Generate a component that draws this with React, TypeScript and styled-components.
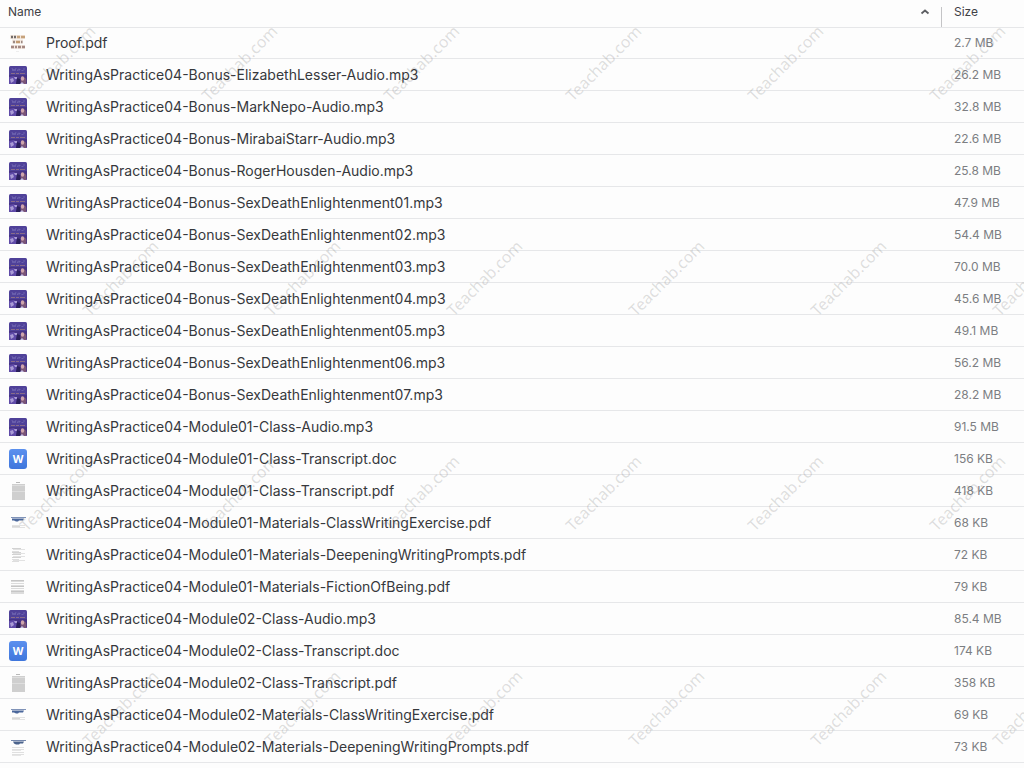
import React from "react";
import styled, { createGlobalStyle } from "styled-components";

const GlobalStyle = createGlobalStyle`
  body {
    margin: 0;
    background: #fdfdfd;
    font-family: Inter, "Liberation Sans", sans-serif;
  }
`;

type Kind = "cover" | "proof" | "doc" | "transcript" | "exercise" | "prompts" | "fiction" | "promptsHeaded";

type FileEntry = { name: string; size: string; kind: Kind };

const P = "WritingAsPractice04-";

const files: FileEntry[] = [
  { name: "Proof.pdf", size: "2.7 MB", kind: "proof" },
  { name: P + "Bonus-ElizabethLesser-Audio.mp3", size: "26.2 MB", kind: "cover" },
  { name: P + "Bonus-MarkNepo-Audio.mp3", size: "32.8 MB", kind: "cover" },
  { name: P + "Bonus-MirabaiStarr-Audio.mp3", size: "22.6 MB", kind: "cover" },
  { name: P + "Bonus-RogerHousden-Audio.mp3", size: "25.8 MB", kind: "cover" },
  { name: P + "Bonus-SexDeathEnlightenment01.mp3", size: "47.9 MB", kind: "cover" },
  { name: P + "Bonus-SexDeathEnlightenment02.mp3", size: "54.4 MB", kind: "cover" },
  { name: P + "Bonus-SexDeathEnlightenment03.mp3", size: "70.0 MB", kind: "cover" },
  { name: P + "Bonus-SexDeathEnlightenment04.mp3", size: "45.6 MB", kind: "cover" },
  { name: P + "Bonus-SexDeathEnlightenment05.mp3", size: "49.1 MB", kind: "cover" },
  { name: P + "Bonus-SexDeathEnlightenment06.mp3", size: "56.2 MB", kind: "cover" },
  { name: P + "Bonus-SexDeathEnlightenment07.mp3", size: "28.2 MB", kind: "cover" },
  { name: P + "Module01-Class-Audio.mp3", size: "91.5 MB", kind: "cover" },
  { name: P + "Module01-Class-Transcript.doc", size: "156 KB", kind: "doc" },
  { name: P + "Module01-Class-Transcript.pdf", size: "418 KB", kind: "transcript" },
  { name: P + "Module01-Materials-ClassWritingExercise.pdf", size: "68 KB", kind: "exercise" },
  { name: P + "Module01-Materials-DeepeningWritingPrompts.pdf", size: "72 KB", kind: "prompts" },
  { name: P + "Module01-Materials-FictionOfBeing.pdf", size: "79 KB", kind: "fiction" },
  { name: P + "Module02-Class-Audio.mp3", size: "85.4 MB", kind: "cover" },
  { name: P + "Module02-Class-Transcript.doc", size: "174 KB", kind: "doc" },
  { name: P + "Module02-Class-Transcript.pdf", size: "358 KB", kind: "transcript" },
  { name: P + "Module02-Materials-ClassWritingExercise.pdf", size: "69 KB", kind: "exercise" },
  { name: P + "Module02-Materials-DeepeningWritingPrompts.pdf", size: "73 KB", kind: "promptsHeaded" },
];

const Page = styled.main`
  position: relative;
  min-height: 100vh;
  overflow: hidden;
`;

const FileTable = styled.table`
  width: 100%;
  table-layout: fixed;
  border-collapse: collapse;
`;

const NameCol = styled.col``;

const SizeCol = styled.col`
  width: 83px;
`;

const HeadCell = styled.th`
  height: 27px;
  padding: 0;
  vertical-align: top;
  text-align: left;
`;

const SortButton = styled.button<{ $divided?: boolean }>`
  display: flex;
  align-items: center;
  justify-content: space-between;
  width: 100%;
  height: 27px;
  padding: ${(p) => (p.$divided ? "0 0 3px 13px" : "0 11px 3px 8px")};
  border: 0;
  background: ${(p) =>
    p.$divided ? "linear-gradient(#c4c4c6, #c4c4c6) 0 7px / 1px 20px no-repeat" : "none"};
  color: #3f4145;
  font: 400 12px/16px Inter, "Liberation Sans", sans-serif;
  text-align: left;
  cursor: pointer;
`;

const Row = styled.tr`
  box-shadow: inset 0 -1px #e6e7e9;

  &:first-child {
    box-shadow: inset 0 -1px #e6e7e9, inset 0 1px #e6e7e9;
  }
`;

const NameCell = styled.td`
  height: 32px;
  padding: 0 8px;
`;

const NameContent = styled.div`
  display: flex;
  align-items: center;
  gap: 18px;
`;

const FileLink = styled.a`
  color: #36383c;
  font-size: 14px;
  line-height: 20px;
  text-decoration: none;
  white-space: nowrap;
`;

const SizeCell = styled.td`
  padding: 0 0 0 13px;
  color: #7c7e82;
  font-size: 12px;
  line-height: 16px;
  white-space: nowrap;
`;

const Thumb = styled.svg`
  flex: none;
  width: 20px;
  height: 20px;
`;

const WatermarkLayer = styled.div`
  position: absolute;
  inset: 0;
  overflow: hidden;
  pointer-events: none;
`;

const WatermarkRow = styled.div<{ $shifted: boolean }>`
  display: flex;
  align-items: center;
  height: 215px;
  margin-left: ${(p) => (p.$shifted ? "29px" : "-34px")};

  &:first-child {
    height: 126px;
    margin-bottom: 44px;
  }
`;

const Watermark = styled.span`
  flex: none;
  width: 182px;
  text-align: center;
`;

const WatermarkText = styled.span`
  display: inline-block;
  transform: rotate(-45deg);
  color: rgba(110, 110, 110, 0.22);
  font: 400 16px/24px "Noto Sans", "Open Sans", sans-serif;
`;

const lines = (ys: number[], x: number, w: number, color: string) =>
  ys.map((y) => <rect key={y} x={x} y={y} width={w} height="1" fill={color} />);

function Art({ kind }: { kind: Kind }) {
  switch (kind) {
    case "cover":
      return (
        <>
          <defs>
            <clipPath id="cover-clip">
              <rect x="1" y="1" width="18" height="18" rx="1.5" />
            </clipPath>
          </defs>
          <g clipPath="url(#cover-clip)">
            <rect x="1" y="1" width="18" height="18" fill="#4f4199" />
            <rect x="1" y="10" width="18" height="9" fill="#463386" />
            <path d="M4 3l1 3 1-2 1 2 1-3M9.5 6V4.5M11 3.5v2.500M10.5 4.500h2M13.500 5.500h2M15 4h2" fill="none" stroke="#7469b4" strokeWidth=".8" />
            <path d="M3 8.500h4M8 8.500h3M12 8.500h5" stroke="#8a6c88" strokeWidth="1" />
            <path d="M1 12l5-1 3 3-1 5H1z" fill="#5f4aa8" />
            <path d="M2 14l3-1 1 3-3 2zM6 12h3v2H7z" fill="#aa9bd6" />
            <path d="M9 13l3 1 1 5H8z" fill="#2a1f5c" />
            <path d="M13 19c-1-4 0-7 2-7 3 0 4 3 3 7z" fill="#7a5578" />
            <ellipse cx="14.500" cy="13.500" rx="1.700" ry="2.300" fill="#cfa5ac" />
            <path d="M12 19l2-2 2 2z" fill="#c4bee4" />
          </g>
        </>
      );
    case "proof":
      return (
        <>
          <path d="M2 4h15M4 8.500h11M3 14h14" stroke="#f4e9e0" strokeWidth="4" />
          <path d="M3 4h2M6 4h2" stroke="#716b69" strokeWidth="2.500" />
          <path d="M9 4h3M13 4h4" stroke="#c6a37c" strokeWidth="2.500" />
          <path d="M5 9h2M13 9h1.500" stroke="#9b8983" strokeWidth="2.500" />
          <path d="M8 9h4" stroke="#c39b72" strokeWidth="2.500" />
          <path d="M3 14h3M7 14h2M10 14h3M14 14h3" stroke="#a48983" strokeWidth="2.500" />
          <path d="M8 18.500h3" stroke="#eeeeee" />
        </>
      );
    case "doc":
      return (
        <>
          <defs>
            <linearGradient id="doc-fill" x1="0" y1="0" x2="0" y2="1">
              <stop offset="0" stopColor="#5b90ee" />
              <stop offset="1" stopColor="#3f76dc" />
            </linearGradient>
          </defs>
          <rect x="1" y="0" width="18" height="20" rx="3" fill="url(#doc-fill)" />
          <text x="10" y="14" textAnchor="middle" fontFamily="Open Sans, sans-serif" fontSize="11" fontWeight="700" fill="#fff">
            W
          </text>
        </>
      );
    case "transcript":
      return (
        <>
          <path d="M8 1.500h4" stroke="#b9b9b9" />
          {lines([3, 5, 6, 7, 8, 9, 11, 12, 13, 14, 15, 16, 17, 18], 4, 13, "#cfcfcf")}
          {lines([4, 10], 4, 13, "#dedede")}
        </>
      );
    case "exercise":
      return (
        <>
          <path d="M3 4.500h15" stroke="#8093b8" />
          <path d="M4 5.500h12l-1 2h-4l-1 1H8l-2-1H4z" fill="#4a679b" />
          {lines([12, 14], 4, 13, "#e2e2e2")}
          {lines([13], 4, 8, "#d8d8d8")}
        </>
      );
    case "promptsHeaded":
      return (
        <>
          <path d="M3 3.500h15" stroke="#7386ab" />
          <path d="M5 4.500h11l-1 2h-3l-1 1H8l-2-1z" fill="#4b638c" />
          {lines([10, 12, 15, 17], 4, 12, "#e0e0e0")}
          {lines([13, 18], 4, 9, "#e6e6e6")}
        </>
      );
    case "prompts":
      return (
        <>
          {lines([3, 7, 9, 12], 4, 9, "#d2d2d2")}
          {lines([4, 8, 11, 15], 5, 12, "#e2e2e2")}
          {lines([6, 14, 16], 4, 7, "#dedede")}
        </>
      );
    case "fiction":
      return (
        <>
          {lines([3, 9, 14], 3, 13, "#c6c6c6")}
          {lines([4, 6, 8, 11, 13, 15, 16], 3, 13, "#dcdcdc")}
        </>
      );
  }
}

function Watermarks() {
  return (
    <WatermarkLayer aria-hidden="true">
      {[0, 1, 2, 3].map((row) => (
        <WatermarkRow key={row} $shifted={row % 2 === 1}>
          {[0, 1, 2, 3, 4, 5].map((n) => (
            <Watermark key={n}>
              <WatermarkText>Teachab.com</WatermarkText>
            </Watermark>
          ))}
        </WatermarkRow>
      ))}
    </WatermarkLayer>
  );
}

export default function App() {
  return (
    <Page>
      <GlobalStyle />
      <FileTable>
        <colgroup>
          <NameCol />
          <SizeCol />
        </colgroup>
        <thead>
          <tr>
            <HeadCell scope="col" aria-sort="ascending">
              <SortButton type="button">
                Name
                <svg width="10" height="8" viewBox="0 0 10 8" aria-hidden="true">
                  <path d="M1.500 5.500L5 2.500l3.500 3" fill="none" stroke="#5c5e62" strokeWidth="1.800" />
                </svg>
              </SortButton>
            </HeadCell>
            <HeadCell scope="col">
              <SortButton type="button" $divided>
                Size
              </SortButton>
            </HeadCell>
          </tr>
        </thead>
        <tbody>
          {files.map((file) => (
            <Row key={file.name}>
              <NameCell>
                <NameContent>
                  <Thumb viewBox="0 0 20 20" aria-hidden="true">
                    <Art kind={file.kind} />
                  </Thumb>
                  <FileLink href="#">{file.name}</FileLink>
                </NameContent>
              </NameCell>
              <SizeCell>{file.size}</SizeCell>
            </Row>
          ))}
        </tbody>
      </FileTable>
      <Watermarks />
    </Page>
  );
}
